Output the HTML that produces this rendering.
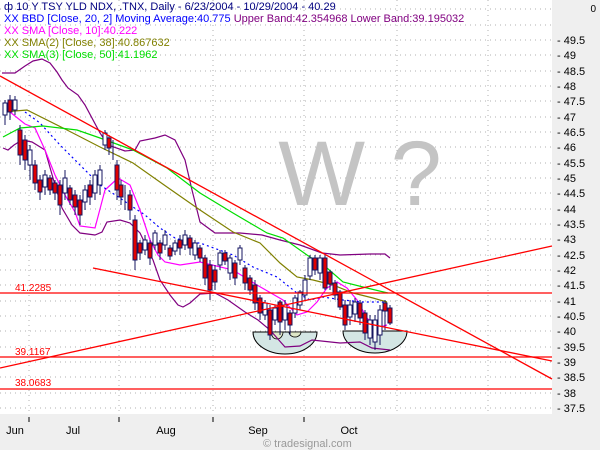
<!DOCTYPE html>
<html><head><meta charset="utf-8"><style>
html,body{margin:0;padding:0;background:#efefef;width:600px;height:450px;overflow:hidden;font-family:"Liberation Sans",sans-serif}
</style></head><body>
<svg width="600" height="450" xmlns="http://www.w3.org/2000/svg" font-family="Liberation Sans, sans-serif">
<rect x="0" y="0" width="600" height="450" fill="#efefef"/>
<rect x="0" y="0" width="552" height="414" fill="#fff"/>
<g stroke="#b0b0b0" stroke-width="1" stroke-dasharray="1,4">
<line x1="29" y1="0" x2="29" y2="414"/><line x1="119" y1="0" x2="119" y2="414"/><line x1="213" y1="0" x2="213" y2="414"/><line x1="304" y1="0" x2="304" y2="414"/><line x1="397" y1="0" x2="397" y2="414"/><line x1="488" y1="0" x2="488" y2="414"/>
<line x1="0" y1="9" x2="552" y2="9"/><line x1="0" y1="25" x2="552" y2="25"/>
<line x1="0" y1="40" x2="552" y2="40"/><line x1="0" y1="55" x2="552" y2="55"/><line x1="0" y1="71" x2="552" y2="71"/><line x1="0" y1="86" x2="552" y2="86"/><line x1="0" y1="101" x2="552" y2="101"/><line x1="0" y1="117" x2="552" y2="117"/><line x1="0" y1="132" x2="552" y2="132"/><line x1="0" y1="147" x2="552" y2="147"/><line x1="0" y1="163" x2="552" y2="163"/><line x1="0" y1="178" x2="552" y2="178"/><line x1="0" y1="193" x2="552" y2="193"/><line x1="0" y1="209" x2="552" y2="209"/><line x1="0" y1="224" x2="552" y2="224"/><line x1="0" y1="239" x2="552" y2="239"/><line x1="0" y1="255" x2="552" y2="255"/><line x1="0" y1="270" x2="552" y2="270"/><line x1="0" y1="285" x2="552" y2="285"/><line x1="0" y1="301" x2="552" y2="301"/><line x1="0" y1="316" x2="552" y2="316"/><line x1="0" y1="331" x2="552" y2="331"/><line x1="0" y1="347" x2="552" y2="347"/><line x1="0" y1="362" x2="552" y2="362"/><line x1="0" y1="377" x2="552" y2="377"/><line x1="0" y1="393" x2="552" y2="393"/><line x1="0" y1="408" x2="552" y2="408"/>
</g>
<text x="360" y="205" font-size="92" fill="#c4c4c4" text-anchor="middle">W ?</text>
<g font-size="11" fill="#000080">
<text x="4" y="10">ф 10 Y TSY YLD NDX, .TNX, Daily - 6/23/2004 - 10/29/2004 - 40.29</text>
<text x="4" y="22" fill="#0000ff">XX BBD [Close, 20, 2] Moving Average:40.775 <tspan fill="#800080">Upper Band:42.354968 Lower Band:39.195032</tspan></text>
<text x="4" y="34" fill="#ff00ff">XX SMA [Close, 10]:40.222</text>
<text x="4" y="46" fill="#808000">XX SMA(2) [Close, 38]:40.867632</text>
<text x="4" y="58" fill="#00dd00">XX SMA(3) [Close, 50]:41.1962</text>
</g>
<text x="596" y="12" font-size="10" fill="#000" text-anchor="end">0</text>
<g stroke="#000" stroke-width="1" fill="#d4e6e4">
<path d="M253,332 A32,22 0 0 0 317,332 Z"/>
<path d="M343,331 A32,22 0 0 0 407,331 Z"/>
</g>
<g stroke="#000" stroke-width="0.8" fill="#dfe8c8">
<path d="M271,332 A6,7 0 0 0 283,332 Z"/>
<path d="M289,332 A6,5 0 0 0 301,332 Z"/>
</g>
<g fill="none" stroke-width="1.2">
<polyline stroke="#800080" points="2,73 15,73 25,66 33,61 42,59 50,63 57,72 62,80 68,88 78,95 85,105 100,133 108,145 125,151 135,150 140,141 155,138 165,135 175,140 185,160 192,190 200,222 215,233 240,233 262,235 280,240 300,245 322,253 340,255 370,254 385,254 390,258"/>
<polyline stroke="#800080" points="3,148 8,150 14,145 22,140 32,142 45,150 55,185 62,208 72,225 80,233 95,235 102,232 107,222 120,220 130,223 140,233 153,260 160,280 170,295 178,305 183,307 190,303 200,294 215,293 228,300 245,312 258,320 270,330 285,347 300,346 312,340 340,343 360,342 372,348 390,350"/>
<polyline stroke="#ff00ff" points="3,108 10,112 25,124 35,128 45,150 55,175 65,195 75,212 80,226 95,228 105,190 118,178 130,185 140,210 150,240 158,255 165,262 180,265 200,262 233,270 257,285 283,300 297,315 307,312 317,302 327,288 337,282 347,288 357,300 367,318 377,328 387,325"/>
<polyline stroke="#0000ff" stroke-dasharray="2,3" points="25,112 40,123 60,145 80,165 100,185 120,198 130,205 145,215 160,228 175,238 190,243 200,243 233,255 253,267 277,277 297,293 310,300 323,297 343,300 363,302 387,302"/>
<polyline stroke="#808000" points="3,112 27,110 67,130 100,147 133,163 167,187 200,210 233,232 260,243 280,263 297,277 313,280 333,285 353,293 373,298 387,302"/>
<polyline stroke="#00dd00" points="3,137 20,128 43,126 77,130 100,138 133,150 167,168 200,193 233,213 267,233 283,238 307,255 327,268 343,282 367,288 388,293"/>
</g>
<g stroke="#141460" stroke-width="1">
<path d="M5,100V125M10,95V120M15,96V115M20,125V165M25,135V170M30,145V180M35,160V190M40,175V200M45,170V195M50,175V195M55,180V200M60,180V215M65,170V200M70,185V205M75,190V215M80,195V225M85,185V210M90,180V205M95,170V200M100,165V195M105,130V150M109,135V155M113,140V160M117,160V200M121,180V205M125,185V210M130,190V220M135,215V270M140,240V260M145,235V255M150,240V265M155,230V250M160,240V260M165,230V250M170,245V260M175,240V255M180,235V255M185,230V250M190,235V255M195,240V260M200,245V262M205,255V285M210,260V300M215,265V290M220,250V270M225,250V265M230,255V280M235,260V285M240,245V265M245,265V290M250,275V295M255,280V310M260,295V320M265,300V320M270,305V340M275,305V325M280,300V335M285,300V330M290,310V335M295,295V318M300,290V310M305,275V300M310,255V280M315,255V275M320,255V280M325,255V290M330,270V290M335,280V300M340,290V310M345,300V330M350,300V325M355,298V322M360,300V325M365,310V340M370,315V345M375,315V350M380,305V345M385,300V330M390,305V325"/>
</g>
<g stroke="#141460" stroke-width="1" fill="#fff">
<rect x="3" y="103" width="4" height="12"/><rect x="13" y="100" width="4" height="10"/><rect x="28" y="150" width="4" height="15"/><rect x="43" y="175" width="4" height="12"/><rect x="63" y="178" width="4" height="15"/><rect x="83" y="190" width="4" height="12"/><rect x="93" y="175" width="4" height="18"/><rect x="98" y="170" width="4" height="15"/><rect x="103" y="133" width="4" height="12"/><rect x="143" y="240" width="4" height="10"/><rect x="153" y="233" width="4" height="12"/><rect x="163" y="235" width="4" height="10"/><rect x="173" y="243" width="4" height="8"/><rect x="183" y="235" width="4" height="10"/><rect x="193" y="243" width="4" height="12"/><rect x="218" y="253" width="4" height="12"/><rect x="228" y="258" width="4" height="15"/><rect x="238" y="248" width="4" height="12"/><rect x="263" y="303" width="4" height="12"/><rect x="273" y="308" width="4" height="12"/><rect x="283" y="305" width="4" height="15"/><rect x="293" y="298" width="4" height="15"/><rect x="298" y="292" width="4" height="13"/><rect x="303" y="280" width="4" height="15"/><rect x="308" y="258" width="4" height="18"/><rect x="318" y="258" width="4" height="15"/><rect x="348" y="305" width="4" height="12"/><rect x="353" y="302" width="4" height="12"/><rect x="368" y="320" width="4" height="18"/><rect x="373" y="320" width="4" height="22"/><rect x="378" y="310" width="4" height="25"/>
</g>
<g stroke="#141460" stroke-width="1" fill="#e00000">
<rect x="8" y="100" width="4" height="12"/><rect x="18" y="130" width="4" height="25"/><rect x="23" y="140" width="4" height="20"/><rect x="33" y="165" width="4" height="18"/><rect x="38" y="180" width="4" height="12"/><rect x="48" y="178" width="4" height="12"/><rect x="53" y="183" width="4" height="10"/><rect x="58" y="185" width="4" height="20"/><rect x="68" y="188" width="4" height="12"/><rect x="73" y="195" width="4" height="12"/><rect x="78" y="200" width="4" height="15"/><rect x="88" y="185" width="4" height="12"/><rect x="107" y="138" width="4" height="10"/><rect x="115" y="165" width="4" height="25"/><rect x="119" y="185" width="4" height="12"/><rect x="128" y="195" width="4" height="15"/><rect x="133" y="220" width="4" height="40"/><rect x="138" y="243" width="4" height="10"/><rect x="148" y="243" width="4" height="15"/><rect x="158" y="243" width="4" height="10"/><rect x="168" y="248" width="4" height="8"/><rect x="178" y="240" width="4" height="8"/><rect x="188" y="238" width="4" height="10"/><rect x="198" y="248" width="4" height="10"/><rect x="203" y="258" width="4" height="20"/><rect x="208" y="265" width="4" height="25"/><rect x="213" y="270" width="4" height="12"/><rect x="223" y="253" width="4" height="8"/><rect x="233" y="263" width="4" height="15"/><rect x="243" y="268" width="4" height="15"/><rect x="248" y="278" width="4" height="12"/><rect x="253" y="285" width="4" height="18"/><rect x="258" y="298" width="4" height="15"/><rect x="268" y="310" width="4" height="25"/><rect x="278" y="302" width="4" height="20"/><rect x="288" y="313" width="4" height="12"/><rect x="313" y="258" width="4" height="12"/><rect x="323" y="258" width="4" height="30"/><rect x="328" y="272" width="4" height="12"/><rect x="333" y="283" width="4" height="12"/><rect x="338" y="292" width="4" height="15"/><rect x="343" y="305" width="4" height="20"/><rect x="358" y="303" width="4" height="15"/><rect x="363" y="313" width="4" height="20"/><rect x="383" y="303" width="4" height="8"/><rect x="388" y="308" width="4" height="15"/>
</g>
<g stroke="#ff0000" stroke-width="1.3" fill="none">
<line x1="0" y1="76" x2="552" y2="379"/>
<line x1="0" y1="368" x2="552" y2="246"/>
<line x1="93" y1="268" x2="552" y2="361"/>
<line x1="0" y1="293" x2="552" y2="293"/>
<line x1="0" y1="357" x2="552" y2="357"/>
<line x1="0" y1="389" x2="552" y2="389"/>
</g>
<g font-size="10" fill="#ff0000">
<text x="15" y="291">41.2285</text>
<text x="15" y="355">39.1167</text>
<text x="15" y="386">38.0683</text>
</g>
<g font-size="11" fill="#000">
<text x="557" y="44">- 49.5</text><text x="557" y="59">- 49</text><text x="557" y="75">- 48.5</text><text x="557" y="90">- 48</text><text x="557" y="105">- 47.5</text><text x="557" y="121">- 47</text><text x="557" y="136">- 46.5</text><text x="557" y="151">- 46</text><text x="557" y="167">- 45.5</text><text x="557" y="182">- 45</text><text x="557" y="197">- 44.5</text><text x="557" y="213">- 44</text><text x="557" y="228">- 43.5</text><text x="557" y="243">- 43</text><text x="557" y="259">- 42.5</text><text x="557" y="274">- 42</text><text x="557" y="289">- 41.5</text><text x="557" y="305">- 41</text><text x="557" y="320">- 40.5</text><text x="557" y="335">- 40</text><text x="557" y="351">- 39.5</text><text x="557" y="366">- 39</text><text x="557" y="381">- 38.5</text><text x="557" y="397">- 38</text><text x="557" y="412">- 37.5</text>
</g>
<g stroke="#000"><line x1="29" y1="417" x2="29" y2="422"/><line x1="119" y1="417" x2="119" y2="422"/><line x1="213" y1="417" x2="213" y2="422"/><line x1="304" y1="417" x2="304" y2="422"/></g>
<g font-size="11" fill="#000" text-anchor="middle">
<text x="15" y="434">Jun</text><text x="73" y="434">Jul</text><text x="166" y="434">Aug</text><text x="258" y="434">Sep</text><text x="349" y="434">Oct</text>
</g>
<text x="263" y="447" font-size="11" fill="#999">© tradesignal.com</text>
</svg>
</body></html>
